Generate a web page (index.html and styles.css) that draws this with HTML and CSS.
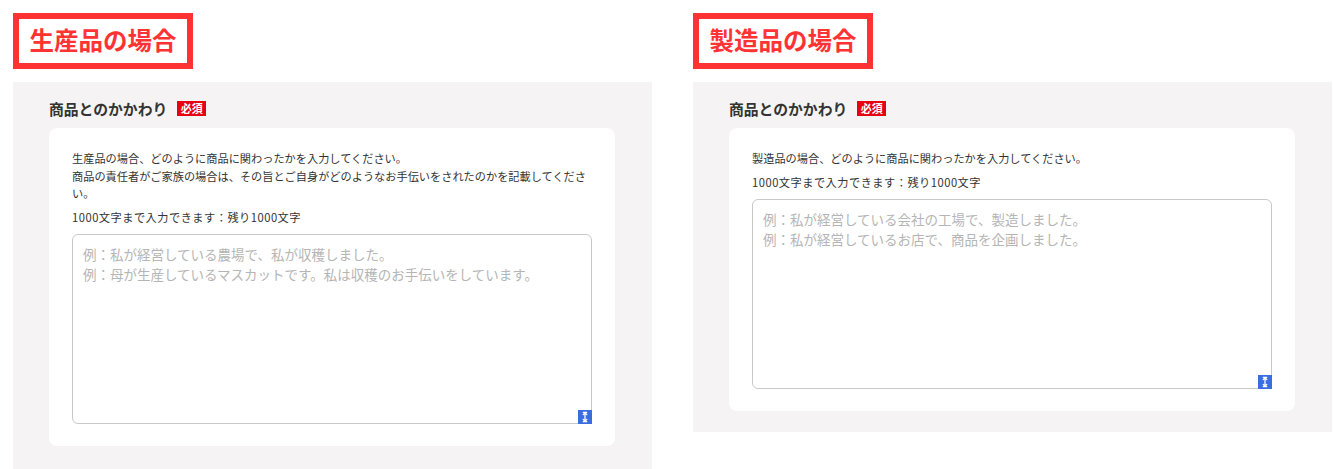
FILE: index.html
```html
<!DOCTYPE html>
<html lang="ja">
<head>
<meta charset="utf-8">
<link rel="stylesheet" href="styles.css">
</head>
<body>
<div class="columns">
  <section class="column">
    <div class="label-box">生産品の場合</div>
    <div class="panel panel--tall">
      <div class="field-head">
        <span class="field-title">商品とのかかわり</span>
        <span class="badge">必須</span>
      </div>
      <div class="card">
        <p class="desc">生産品の場合、どのように商品に関わったかを入力してください。<br>商品の責任者がご家族の場合は、その旨とご自身がどのようなお手伝いをされたのかを記載してください。</p>
        <p class="counter">1000文字まで入力できます：残り1000文字</p>
        <div class="area-wrap">
          <textarea class="area" placeholder="例：私が経営している農場で、私が収穫しました。&#10;例：母が生産しているマスカットです。私は収穫のお手伝いをしています。"></textarea>
          <span class="grip"><svg width="14" height="14" viewBox="0 0 14 14"><path d="M7 3v8M5.2 4.6L7 2.8l1.8 1.8M5.2 9.4L7 11.2l1.8-1.8M5.3 2.3h3.4M5.3 11.7h3.4" stroke="#fff" stroke-width="1.3" fill="none" stroke-linecap="round" stroke-linejoin="round"/></svg></span>
        </div>
      </div>
    </div>
  </section>
  <section class="column">
    <div class="label-box">製造品の場合</div>
    <div class="panel">
      <div class="field-head">
        <span class="field-title">商品とのかかわり</span>
        <span class="badge">必須</span>
      </div>
      <div class="card">
        <p class="desc">製造品の場合、どのように商品に関わったかを入力してください。</p>
        <p class="counter">1000文字まで入力できます：残り1000文字</p>
        <div class="area-wrap">
          <textarea class="area" placeholder="例：私が経営している会社の工場で、製造しました。&#10;例：私が経営しているお店で、商品を企画しました。"></textarea>
          <span class="grip"><svg width="14" height="14" viewBox="0 0 14 14"><path d="M7 3v8M5.2 4.6L7 2.8l1.8 1.8M5.2 9.4L7 11.2l1.8-1.8M5.3 2.3h3.4M5.3 11.7h3.4" stroke="#fff" stroke-width="1.3" fill="none" stroke-linecap="round" stroke-linejoin="round"/></svg></span>
        </div>
      </div>
    </div>
  </section>
</div>
</body>
</html>
```
FILE: styles.css
```css
* { box-sizing: border-box; }
html, body { margin: 0; padding: 0; background: #fff; }
body {
  font-family: "Noto Sans CJK JP", "Noto Sans", sans-serif;
  color: #333;
  padding: 13px 0 0 13px;
  overflow: hidden;
}
.columns {
  display: flex;
  align-items: flex-start;
  gap: 41px;
}
.column {
  width: 639px;
  display: flex;
  flex-direction: column;
}
.label-box {
  width: 180px;
  height: 56px;
  border: 6px solid #ff3333;
  color: #ff3333;
  font-weight: 700;
  font-size: 24.5px;
  line-height: 42px;
  text-align: center;
  margin-bottom: 13px;
}
.panel {
  background: #f5f3f4;
  padding: 16px 37px 21px 36px;
}
.panel--tall { padding-bottom: 40px; }
.field-head {
  display: flex;
  align-items: center;
  height: 21px;
  margin-bottom: 9px;
}
.field-title {
  font-size: 14.8px;
  font-weight: 700;
  color: #333;
  line-height: 21px;
}
.badge {
  margin-left: 10px;
  background: #e50012;
  color: #fff;
  font-size: 11px;
  font-weight: 700;
  width: 29px;
  height: 15px;
  line-height: 15px;
  text-align: center;
}
.card {
  background: #fff;
  border-radius: 8px;
  padding: 22px 23px;
}
.desc {
  margin: 0;
  font-size: 11.2px;
  line-height: 17.5px;
  color: #333;
}
.counter {
  margin: 6px 0 8px;
  font-size: 11.2px;
  line-height: 17.5px;
  letter-spacing: 0.5px;
  color: #333;
}
.area-wrap {
  position: relative;
  width: 520px;
  height: 190px;
}
.area {
  display: block;
  width: 520px;
  height: 190px;
  border: 1px solid #c9c9c9;
  border-radius: 6px;
  padding: 9px 10px;
  font-family: "Noto Sans CJK JP", "Noto Sans", sans-serif;
  font-size: 13.5px;
  line-height: 20px;
  color: #333;
  resize: none;
  outline: none;
  background: #fff;
}
.area::placeholder { color: #b5b5b5; }
.grip {
  position: absolute;
  right: 0;
  bottom: 0;
  width: 14px;
  height: 14px;
  background: #3a6ee0;
  display: flex;
}
```
